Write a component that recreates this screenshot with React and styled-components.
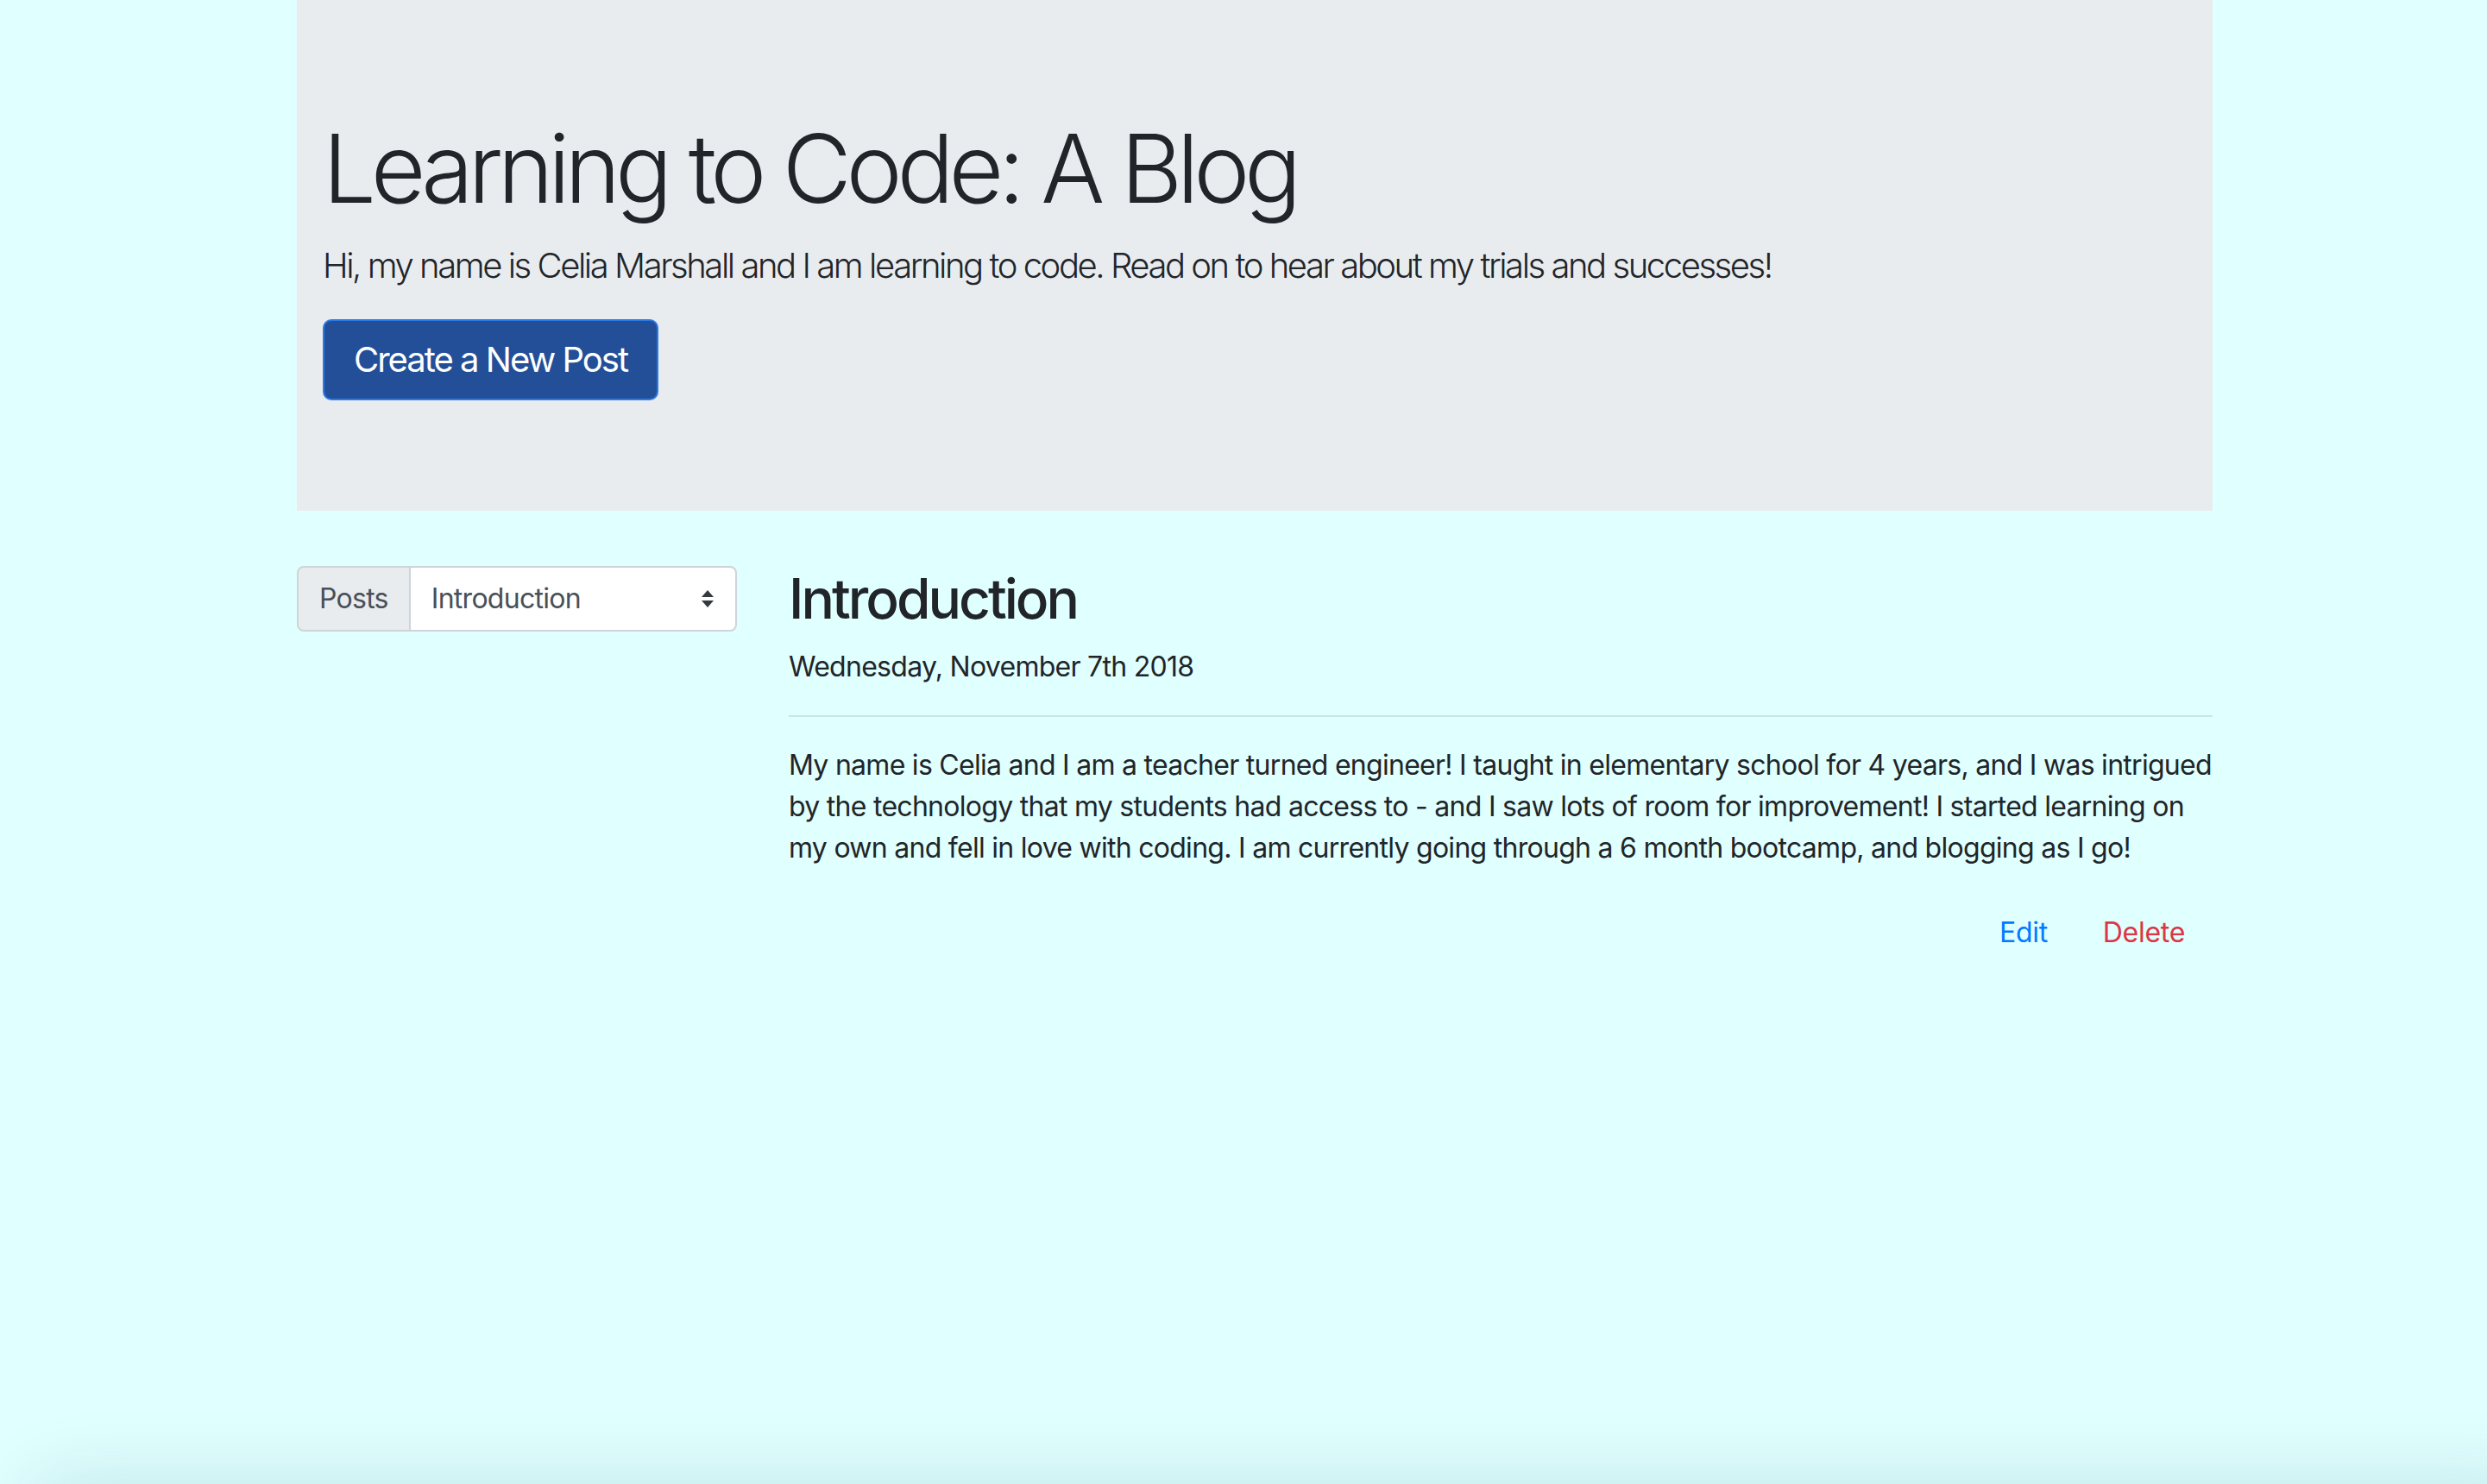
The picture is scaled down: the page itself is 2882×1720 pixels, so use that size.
import React from "react";
import styled, { createGlobalStyle } from "styled-components";

const GlobalStyle = createGlobalStyle`
  html, body {
    margin: 0;
    padding: 0;
    background: #e0ffff;
    min-height: 100%;
  }
  body {
    font-family: Inter, "Noto Sans", sans-serif;
    color: #212529;
    font-size: 32px;
    line-height: 1.5;
    letter-spacing: -0.72px;
  }
  * {
    box-sizing: border-box;
  }
`;

const Page = styled.div`
  min-height: 1720px;
  padding-left: 344px;
`;

const Container = styled.div`
  width: 2220px;
`;

const Jumbotron = styled.header`
  background: #e9ecef;
  padding: 128px 30px;
  margin-bottom: 64px;
`;

const Title = styled.h1`
  margin: 0 0 16px;
  font-size: 110px;
  font-weight: 300;
  line-height: 1.22;
  letter-spacing: -6.3px;
`;

const Lead = styled.p`
  margin: 0 0 32px;
  font-size: 40px;
  font-weight: 300;
  line-height: 1.5;
  letter-spacing: -2.45px;
`;

const PrimaryButton = styled.button`
  font-family: inherit;
  font-size: 40px;
  line-height: 1.5;
  padding: 15px 34px;
  color: #fff;
  background: #234f98;
  border: 2px solid #2a7be6;
  border-radius: 10px;
  cursor: pointer;
  letter-spacing: -2px;
`;

const Row = styled.div`
  display: grid;
  grid-template-columns: 510px 1650px;
  column-gap: 60px;
`;

const InputGroup = styled.div`
  display: flex;
  height: 76px;
`;

const Addon = styled.span`
  display: flex;
  align-items: center;
  padding: 0 24px;
  font-size: 32px;
  color: #495057;
  background: #e9ecef;
  border: 2px solid #ced4da;
  border-radius: 8px 0 0 8px;
`;

const SelectBox = styled.div`
  flex: 1;
  display: flex;
  align-items: center;
  justify-content: space-between;
  padding: 0 24px;
  font-size: 32px;
  color: #495057;
  background: #fff;
  border: 2px solid #ced4da;
  border-left: none;
  border-radius: 0 8px 8px 0;
`;

const PostTitle = styled.h2`
  margin: 0 0 16px;
  font-size: 64px;
  font-weight: 500;
  line-height: 1.2;
  letter-spacing: -3px;
`;

const Text = styled.p`
  margin: 0 0 32px;
  font-size: 32px;
  line-height: 1.5;
`;

const Rule = styled.hr`
  margin: 0 0 32px;
  border: 0;
  border-top: 2px solid rgba(0, 0, 0, 0.1);
`;

const Actions = styled.div`
  display: flex;
  justify-content: flex-end;
  gap: 16px;
  padding-right: 8px;
  margin-top: 38px;
`;

const LinkButton = styled.button`
  font-family: inherit;
  font-size: 32px;
  line-height: 1.5;
  letter-spacing: -0.3px;
  padding: 12px 24px;
  background: none;
  border: 0;
  color: ${(p) => (p.$danger ? "#dc3545" : "#007bff")};
  cursor: pointer;
`;

const BottomShade = styled.div`
  position: fixed;
  left: 40px;
  right: -60px;
  bottom: -120px;
  height: 120px;
  box-shadow: 0 0 90px rgba(0, 70, 80, 0.14);
`;

const SortIcon = () => (
  <svg width="16" height="24" viewBox="0 0 16 24">
    <path d="M8 2 L15 10 H1 Z M1 14 H15 L8 22 Z" fill="#343a40" />
  </svg>
);

export default function App() {
  return (
    <>
      <GlobalStyle />
      <Page>
        <Container>
          <Jumbotron>
            <Title>Learning to Code: A Blog</Title>
            <Lead>
              Hi, my name is Celia Marshall and I am learning to code. Read on to hear about my trials and successes!
            </Lead>
            <PrimaryButton>Create a New Post</PrimaryButton>
          </Jumbotron>
          <Row>
            <div>
              <InputGroup>
                <Addon>Posts</Addon>
                <SelectBox>
                  <span>Introduction</span>
                  <SortIcon />
                </SelectBox>
              </InputGroup>
            </div>
            <article>
              <PostTitle>Introduction</PostTitle>
              <Text>Wednesday, November 7th 2018</Text>
              <Rule />
              <Text>
                My name is Celia and I am a teacher turned engineer! I taught in elementary school for 4 years, and I was intrigued by the technology that my students had access to - and I saw lots of room for improvement! I started learning on my own and fell in love with coding. I am currently going through a 6 month bootcamp, and blogging as I go!
              </Text>
              <Actions>
                <LinkButton>Edit</LinkButton>
                <LinkButton $danger>Delete</LinkButton>
              </Actions>
            </article>
          </Row>
        </Container>
      </Page>
      <BottomShade />
    </>
  );
}
